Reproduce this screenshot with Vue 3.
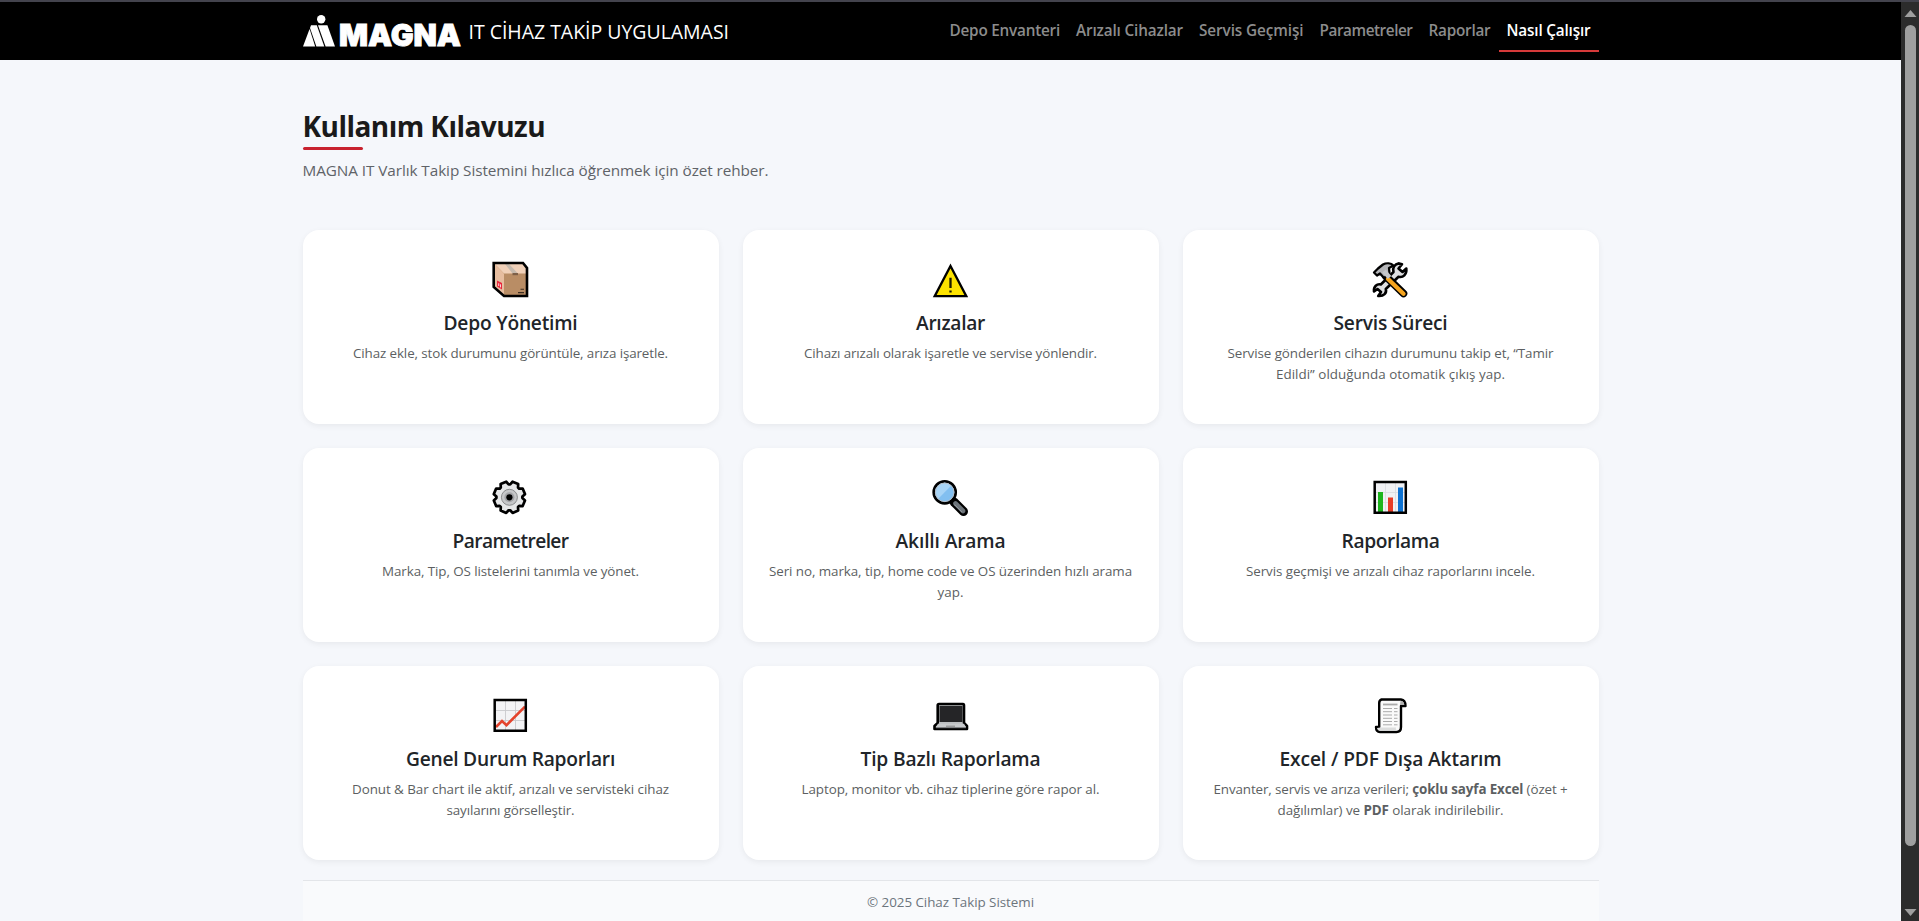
<script setup>
const links = [
  { t: 'Depo Envanteri', w: 110.5 },
  { t: 'Arızalı Cihazlar', w: 107 },
  { t: 'Servis Geçmişi', w: 104.5 },
  { t: 'Parametreler', w: 93 },
  { t: 'Raporlar', w: 62 },
  { t: 'Nasıl Çalışır', w: 84, active: true },
]
const cards = [
  { icon: 'box', t: 'Depo Yönetimi', w: 134, lines: [{ w: 315, p: ['Cihaz ekle, stok durumunu görüntüle, arıza işaretle.'] }] },
  { icon: 'warn', t: 'Arızalar', w: 69, lines: [{ w: 293, p: ['Cihazı arızalı olarak işaretle ve servise yönlendir.'] }] },
  { icon: 'tools', t: 'Servis Süreci', w: 114, lines: [{ w: 326, p: ['Servise gönderilen cihazın durumunu takip et, “Tamir'] }, { w: 229, p: ['Edildi” olduğunda otomatik çıkış yap.'] }] },
  { icon: 'gear', t: 'Parametreler', w: 116, lines: [{ w: 257, p: ['Marka, Tip, OS listelerini tanımla ve yönet.'] }] },
  { icon: 'search', t: 'Akıllı Arama', w: 110, lines: [{ w: 363, p: ['Seri no, marka, tip, home code ve OS üzerinden hızlı arama'] }, { w: 26, p: ['yap.'] }] },
  { icon: 'bars', t: 'Raporlama', w: 98, lines: [{ w: 289, p: ['Servis geçmişi ve arızalı cihaz raporlarını incele.'] }] },
  { icon: 'trend', t: 'Genel Durum Raporları', w: 209, lines: [{ w: 317, p: ['Donut & Bar chart ile aktif, arızalı ve servisteki cihaz'] }, { w: 128, p: ['sayılarını görselleştir.'] }] },
  { icon: 'laptop', t: 'Tip Bazlı Raporlama', w: 180, lines: [{ w: 298, p: ['Laptop, monitor vb. cihaz tiplerine göre rapor al.'] }] },
  { icon: 'scroll', t: 'Excel / PDF Dışa Aktarım', w: 222, lines: [{ w: 354, p: ['Envanter, servis ve arıza verileri; ', 'çoklu sayfa Excel', ' (özet +'] }, { w: 226, p: ['dağılımlar) ve ', 'PDF', ' olarak indirilebilir.'] }] },
]
// Outline of an eight-toothed gear, centred on (19.4, 19.3).
const gear = (() => {
  const pts = []
  for (let k = 0; k < 8; k++) {
    for (const [deg, r] of [[-19, 13], [-11, 15.9], [11, 15.9], [19, 13]]) {
      const a = ((22.5 + 45 * k + deg) * Math.PI) / 180
      pts.push(`${(19.4 + r * Math.cos(a)).toFixed(2)} ${(19.3 + r * Math.sin(a)).toFixed(2)}`)
    }
  }
  return `M${pts.join('L')}z`
})()
// Spreads the letters so a line of text takes the given width.
const vFit = {
  mounted(el, { value }) {
    const n = el.textContent.length
    el.style.letterSpacing = `${(value - el.getBoundingClientRect().width) / n}px`
  },
}
</script>

<template>
  <div class="page">
    <div class="view">
      <header class="nav">
        <div class="container nav-in">
          <div class="brand">
            <svg class="logo" width="160" height="40" viewBox="0 0 160 40">
              <g fill="#fff">
                <circle cx="18.2" cy="5.2" r="4.2" />
                <path d="M0 32.5 6.6 15 12.2 32.5z" />
                <path d="M8 11.2H13.8L21.3 32.5H13.4L7 14z" />
                <path d="M15 11.2H24.4L32 32.5H22.6z" />
              </g>
              <text x="36" y="32.4" textLength="122" lengthAdjust="spacingAndGlyphs">MAGNA</text>
            </svg>
            <span v-fit="260.5" class="fit brand-text">IT CİHAZ TAKİP UYGULAMASI</span>
          </div>
          <nav class="links">
            <a v-for="l in links" :key="l.t" class="link" :class="{ active: l.active }"><span v-fit="l.w" class="fit">{{ l.t }}</span></a>
          </nav>
        </div>
      </header>

      <main class="container">
        <h1 class="title"><span v-fit="242.5" class="fit">Kullanım Kılavuzu</span></h1>
        <p class="sub"><span v-fit="466" class="fit">MAGNA IT Varlık Takip Sistemini hızlıca öğrenmek için özet rehber.</span></p>

        <section class="grid">
          <article v-for="c in cards" :key="c.t" class="card">
            <svg class="icon" width="40" height="40" viewBox="0 0 40 40">
              <g v-if="c.icon === 'box'">
                <path d="M3.7 3H33L37 8V36H14L3.7 27z" fill="#b98d65" />
                <path d="M3.7 3H33L37 8V13.5H14z" fill="#f0d0b8" />
                <path d="M3.7 3 14 13.5V36L3.7 27z" fill="#e6bd9f" />
                <path d="M15 4H19L28 13.5H22.5z" fill="#c5b9ad" />
                <path d="M22.5 13H28V15.2H22.5z" fill="#7e6048" />
                <path d="M7 20.5 12 23V29.5L7 26.5z" fill="#e8283c" />
                <path d="M8.7 23.3V26M10.5 24.3V27.4" stroke="#fff" stroke-width=".8" />
                <path d="M30.5 29.3H34M28 32.6H34" stroke="#3d2d21" stroke-width="1.1" />
                <path d="M3.7 3H33L37 8V36H14L3.7 27z" fill="none" stroke="#000" stroke-width="2.6" />
              </g>
              <g v-else-if="c.icon === 'warn'">
                <path d="M20.5 6 36.3 36.2H4.7z" fill="#fde300" stroke="#000" stroke-width="2.3" />
                <path d="M20.5 17.8V28M20.5 30.4V32.4" stroke="#1c1a00" stroke-width="2.3" />
              </g>
              <g v-else-if="c.icon === 'tools'">
                <path d="M29 3.4C24.5 4 22.2 8 23.5 12L10.8 24.5C7 23.5 3.4 26.5 4 31.5L7.5 29 11 32 8.2 36C14 36.5 17 33 15.8 29L28.5 16.7C33 18 37 14.5 36.3 8.5L32.5 12 28.5 8.5 32 4.2z" fill="#dedfe1" stroke="#000" stroke-width="2.6" stroke-linejoin="round" />
                <path d="M16 16.5 33.5 33.5" stroke="#000" stroke-width="7.6" stroke-linecap="round" />
                <path d="M18 19 33.5 33.7" stroke="#f6a51f" stroke-width="4.3" stroke-linecap="round" />
                <path d="M4 12.5 8 8.5 13 4.5C16.5 2.7 21 3.1 23.5 5.5L19 8 19.5 13 14 18 10 13.5 7 15.5z" fill="#b4b5b8" stroke="#000" stroke-width="2.3" stroke-linejoin="round" />
                <path d="M14 11 19.5 17.5" stroke="#c6c7ca" stroke-width="4.6" />
              </g>
              <g v-else-if="c.icon === 'gear'">
                <path :d="gear" fill="#e6e7e8" stroke="#000" stroke-width="2.7" stroke-linejoin="round" />
                <circle cx="19.4" cy="19.3" r="8" fill="#c6c7c9" stroke="#77787a" stroke-width=".8" />
                <circle cx="19.4" cy="19.3" r="5" fill="#a3a4a7" />
                <circle cx="19.4" cy="19.3" r="3.1" fill="#000" />
              </g>
              <g v-else-if="c.icon === 'search'">
                <path d="M24 24 33.5 33.5" stroke="#000" stroke-width="9" stroke-linecap="round" />
                <path d="M25.5 25.5 33 33" stroke="#6c7379" stroke-width="4.6" stroke-linecap="round" />
                <path d="M24.5 26.5 32 34" stroke="#90979c" stroke-width="1" />
                <circle cx="14.7" cy="14.3" r="11" fill="#82bff0" stroke="#000" stroke-width="2.7" />
                <path d="M8 21 21.3 7.6A9.4 9.4 0 0 0 8 21" fill="#a8d4f6" />
                <circle cx="14.7" cy="14.3" r="9.3" fill="none" stroke="#b6bdc4" stroke-width="1" />
              </g>
              <g v-else-if="c.icon === 'bars'">
                <path d="M4.7 4H35.8V34.8H4.7z" fill="#f0f1f4" />
                <path d="M6 14.5H35M6 24.5H35M15.5 5V34M25.5 5V34" stroke="#d8dade" stroke-width=".8" />
                <path d="M8 14H13V34H8z" fill="#1db51d" />
                <path d="M18 19.5H23V34H18z" fill="#e63c27" />
                <path d="M28 9.5H33V34H28z" fill="#0d72d2" />
                <path d="M4.7 4H35.8V34.8H4.7z" fill="none" stroke="#000" stroke-width="2.5" />
              </g>
              <g v-else-if="c.icon === 'trend'">
                <path d="M4.7 4H35.8V34.8H4.7z" fill="#f3f3f5" />
                <path d="M6 14.5H35M6 24.5H35M15.5 5V34M25.5 5V34" stroke="#c9cacd" stroke-width=".9" />
                <path d="M6 31 12 25 16.5 29.2 35 10.7" fill="none" stroke="#e4442d" stroke-width="2.6" />
                <path d="M4.7 4H35.8V34.8H4.7z" fill="none" stroke="#000" stroke-width="2.5" />
              </g>
              <g v-else-if="c.icon === 'laptop'">
                <path d="M9 8H33Q34 8 34 9.5V27L37 30V33H4.5V30L7.7 27V9.5Q7.7 8 9 8z" fill="#bdbfc1" stroke="#000" stroke-width="2.6" stroke-linejoin="round" />
                <path d="M9.5 10H32.5V26H9.5z" fill="#252527" />
                <path d="M8 27.7H34L36 31H6z" fill="#c9cbcd" />
                <path d="M16 30.2H25" stroke="#888" stroke-width="1" />
                <path d="M6 31.7H36" stroke="#808284" stroke-width="1" />
              </g>
              <g v-else>
                <path d="M11.5 3.5H31Q35.5 4 35.5 10H31V31Q31 36 26.5 36H10Q6 36 6 31H9.2V7Q9.2 4.2 11.5 3.5z" fill="#fafafa" stroke="#000" stroke-width="2.4" stroke-linejoin="round" />
                <path d="M10.5 31.5H26Q25 33 27 34.8H10.5Q7.5 34.5 7.2 32z" fill="#dcdddd" />
                <path d="M30.5 4.7Q34 5 34.3 9H30z" fill="#b0b0b0" />
                <path d="M13 8.5H27.5" stroke="#aaa" stroke-width="1.8" />
                <path d="M13 12.5H22M24 12.5H27.5M13 15.7H22M24 15.7H27.5M13 19H22M24 19H27.5M13 22.3H22M24 22.3H27.5M13 25.5H22M24 25.5H27.5M13 28.8H22M24 28.8H27.5" stroke="#aaa" stroke-width="1" />
              </g>
            </svg>
            <h2><span v-fit="c.w" class="fit">{{ c.t }}</span></h2>
            <p v-for="(l, i) in c.lines" :key="i" class="line"><span v-fit="l.w" class="fit"><template v-for="(s, j) in l.p" :key="j"><b v-if="j === 1">{{ s }}</b><template v-else>{{ s }}</template></template></span></p>
          </article>
        </section>

        <footer class="foot"><span v-fit="167" class="fit">© 2025 Cihaz Takip Sistemi</span></footer>
      </main>
    </div>
    <aside class="scroll">
      <svg width="18" height="20" viewBox="0 0 18 20"><path d="M9.5 8 15.5 15H3.5z" fill="#9f9f9f" /></svg>
      <div class="thumb"></div>
      <svg class="down" width="18" height="20" viewBox="0 0 18 20"><path d="M9.5 15 15.5 8H3.5z" fill="#9f9f9f" /></svg>
    </aside>
  </div>
</template>

<style>
body { margin: 0; overflow: hidden; background: #f5f7fb; }
</style>
<style scoped>
.page { display: flex; box-sizing: border-box; height: 921px; overflow: hidden; border-top: 2px solid #43434d; font-family: "Open Sans", "Noto Sans", sans-serif; color: #212529; }
.view { flex: 1; min-width: 0; background: #f5f7fb; }
.container { width: 1296px; margin: 0 auto; }
.fit { display: inline-block; white-space: pre; }
.nav { height: 58px; background: #000; }
.nav-in { display: flex; justify-content: space-between; height: 58px; }
.brand { display: flex; }
.logo { margin-top: 12px; flex: none; overflow: visible; }
.logo text { font: 900 30px Inter, sans-serif; fill: #fff; stroke: #fff; stroke-width: .9px; }
.brand-text { margin-left: 6px; margin-top: 15px; color: #fff; font-size: 19.5px; line-height: 30px; height: 30px; }
.links { display: flex; padding-top: 8px; height: 42px; }
.link { box-sizing: border-box; padding: 8px 8px 0; height: 42px; font-size: 15.3px; font-weight: 650; line-height: 25px; color: #8c8c8c; border-bottom: 2px solid transparent; }
.link.active { color: #fff; border-color: #d63a3a; }
.title { margin: 0; padding-top: 47px; font-size: 28px; font-weight: 700; line-height: 38px; height: 38px; color: #1a1a1a; }
.title::after { content: ""; display: block; width: 60px; height: 3px; margin-top: 2px; border-radius: 2px; background: #c8222f; }
.sub { margin: 0; padding-top: 12px; margin-top: 1px; font-size: 15.3px; line-height: 24px; height: 24px; color: #5f6368; }
.grid { display: grid; grid-template-columns: repeat(3, 416px); grid-auto-rows: 194px; gap: 24px; margin-top: 48px; }
.card { background: #fff; border-radius: 16px; box-shadow: 0 2px 6px rgba(0, 0, 0, .06); text-align: center; padding-top: 30px; box-sizing: border-box; }
.icon { display: block; margin: 0 0 0 187px; }
h2 { margin: 11px 0 8px; font-size: 19.2px; font-weight: 600; line-height: 24px; height: 24px; }
.line { margin: 0; font-size: 13.4px; line-height: 21px; height: 21px; color: #5c5f62; }
.line b { line-height: 1; font-weight: 700; }
.foot { margin-top: 20px; height: 60px; border-top: 1px solid #e3e5e9; background: #f9fafc; text-align: center; font-size: 13.4px; line-height: 42px; color: #6c757d; }
.scroll { display: flex; flex-direction: column; width: 18px; background: #2c2c2c; }
.thumb { width: 11px; height: 821px; margin: 3px 0 0 4px; border-radius: 6px; background: #9f9f9f; }
.down { margin-top: auto; }
</style>
